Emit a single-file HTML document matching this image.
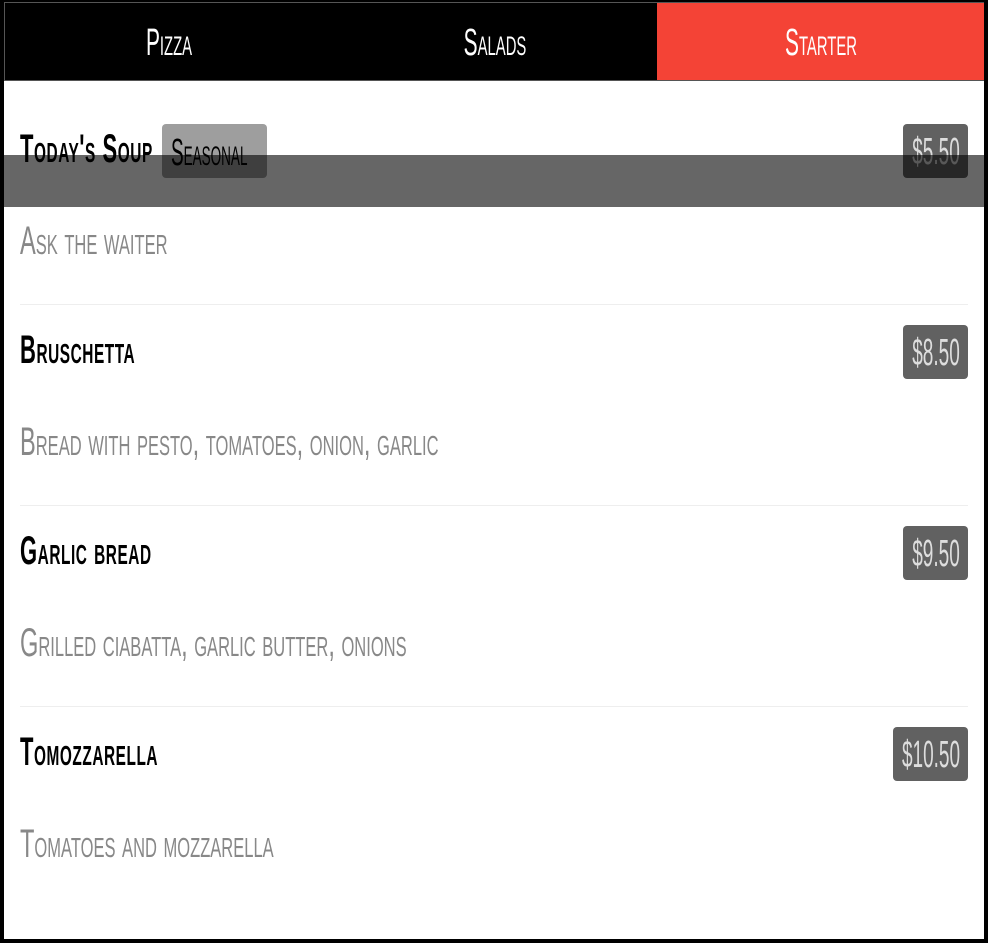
<!DOCTYPE html>
<html><head><style>
body{margin:0;width:988px;height:943px;background:#000;overflow:hidden;position:relative;font-family:"Liberation Sans Narrow","Liberation Sans",sans-serif}
.main{position:absolute;left:4px;top:2px;width:980px;height:937px;background:#fff}
.bar{position:absolute;left:4px;top:2px;width:980px;height:79px;background:#000;border:1px solid #555;box-sizing:border-box}
.tab{position:absolute;top:0;height:77px;width:327px;color:#fff;font-size:38px;line-height:80px;font-variant:small-caps}
.tab span{position:absolute;left:50%;transform:translateX(-50%) scaleX(.55);white-space:nowrap}
.t{position:absolute;left:20px;font-size:40px;font-weight:bold;font-variant:small-caps;transform:scaleX(.55);transform-origin:left;white-space:nowrap;color:#000;letter-spacing:1px}
.d{position:absolute;left:20px;font-size:40px;font-variant:small-caps;transform:scaleX(.59);transform-origin:left;white-space:nowrap;color:#888}
.p{position:absolute;right:20px;height:54px;background:#616161;color:#ddd;border-radius:4px;font-size:38px;line-height:56px}
.p span{position:absolute;left:50%;transform:translateX(-50%) scaleX(.5);white-space:nowrap}
.hr{position:absolute;left:20px;width:948px;border-top:1px solid #eee}
.ov{position:absolute;left:4px;top:155px;width:980px;height:52px;background:rgba(0,0,0,.6)}
</style></head><body>
<div class="main"></div>
<div class="bar">
<div class="tab" style="left:0"><span>Pizza</span></div>
<div class="tab" style="left:326px"><span>Salads</span></div>
<div class="tab" style="left:652px;background:#f44336"><span>Starter</span></div>
</div>
<div class="t" style="top:127px">Today's Soup</div>
<div style="position:absolute;left:162px;top:124px;width:105px;height:54px;background:#9e9e9e;border-radius:4px;font-size:38px;line-height:58px;color:#000;font-variant:small-caps;overflow:hidden"><span style="display:inline-block;transform:scaleX(.5);transform-origin:left;margin-left:9px;white-space:nowrap">Seasonal</span></div>
<div class="p" style="top:124px;width:65px"><span>$5.50</span></div>
<div class="d" style="top:219px">Ask the waiter</div>
<div class="hr" style="top:304px"></div>
<div class="t" style="top:328px">Bruschetta</div>
<div class="p" style="top:325px;width:65px"><span>$8.50</span></div>
<div class="d" style="top:420px">Bread with pesto, tomatoes, onion, garlic</div>
<div class="hr" style="top:505px"></div>
<div class="t" style="top:529px">Garlic bread</div>
<div class="p" style="top:526px;width:65px"><span>$9.50</span></div>
<div class="d" style="top:621px">Grilled ciabatta, garlic butter, onions</div>
<div class="hr" style="top:706px"></div>
<div class="t" style="top:730px">Tomozzarella</div>
<div class="p" style="top:727px;width:75px"><span>$10.50</span></div>
<div class="d" style="top:822px">Tomatoes and mozzarella</div>
<div class="ov"></div>
</body></html>
